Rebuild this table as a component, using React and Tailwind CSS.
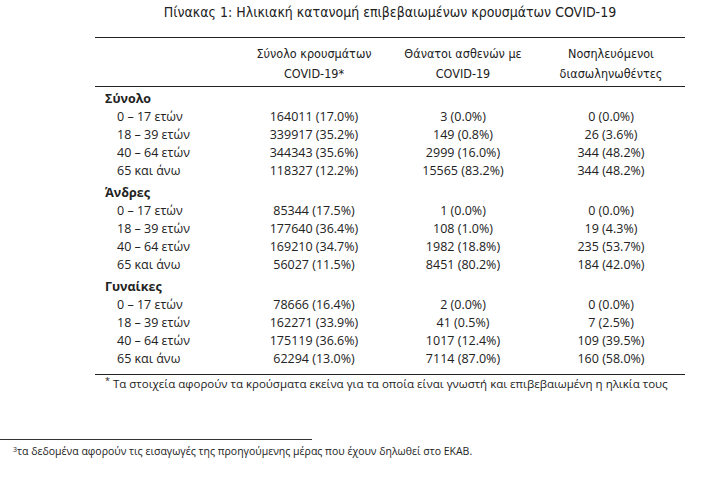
import React from "react";

const groups = [
  {
    name: "Σύνολο",
    rows: [
      ["0 – 17 ετών", "164011 (17.0%)", "3 (0.0%)", "0 (0.0%)"],
      ["18 – 39 ετών", "339917 (35.2%)", "149 (0.8%)", "26 (3.6%)"],
      ["40 – 64 ετών", "344343 (35.6%)", "2999 (16.0%)", "344 (48.2%)"],
      ["65 και άνω", "118327 (12.2%)", "15565 (83.2%)", "344 (48.2%)"],
    ],
  },
  {
    name: "Άνδρες",
    rows: [
      ["0 – 17 ετών", "85344 (17.5%)", "1 (0.0%)", "0 (0.0%)"],
      ["18 – 39 ετών", "177640 (36.4%)", "108 (1.0%)", "19 (4.3%)"],
      ["40 – 64 ετών", "169210 (34.7%)", "1982 (18.8%)", "235 (53.7%)"],
      ["65 και άνω", "56027 (11.5%)", "8451 (80.2%)", "184 (42.0%)"],
    ],
  },
  {
    name: "Γυναίκες",
    rows: [
      ["0 – 17 ετών", "78666 (16.4%)", "2 (0.0%)", "0 (0.0%)"],
      ["18 – 39 ετών", "162271 (33.9%)", "41 (0.5%)", "7 (2.5%)"],
      ["40 – 64 ετών", "175119 (36.6%)", "1017 (12.4%)", "109 (39.5%)"],
      ["65 και άνω", "62294 (13.0%)", "7114 (87.0%)", "160 (58.0%)"],
    ],
  },
];

const narrow = "font-['Liberation_Sans_Narrow','DejaVu_Sans_Condensed',sans-serif]";
const cols = "grid grid-cols-[144px_150px_148px_148px]";

export default function App() {
  return (
    <div className="w-[719px] h-[486px] bg-white text-[#222] overflow-hidden">
      <div className="ml-[95px] w-[590px]">
        <div className={`h-6 text-center text-[14px] leading-6 ${narrow}`}>
          Πίνακας 1: Ηλικιακή κατανομή επιβεβαιωμένων κρουσμάτων COVID-19
        </div>

        <div className="mt-[13px] border-t-[1.5px] border-[#222]" />
        <div className={`${cols} pt-[6px] pb-[2px] text-[12.5px] leading-5 ${narrow}`}>
          <div />
          <div className="text-center">
            Σύνολο κρουσμάτων
            <br />
            COVID-19*
          </div>
          <div className="text-center">
            Θάνατοι ασθενών με
            <br />
            COVID-19
          </div>
          <div className="text-center">
            Νοσηλευόμενοι
            <br />
            διασωληνωθέντες
          </div>
        </div>
        <div className="border-t-[1.5px] border-[#222]" />

        <div className="pt-[3px] pb-[6px] font-['Open_Sans',sans-serif] text-[12.5px] leading-[18px]">
          {groups.map((g, gi) => (
            <div key={g.name} className={gi > 0 ? "pt-1" : ""}>
              <div className="pl-[10px] font-bold">{g.name}</div>
              {g.rows.map((r) => (
                <div key={r[0]} className={cols}>
                  <div className="pl-[22px]">{r[0]}</div>
                  <div className="text-center">{r[1]}</div>
                  <div className="text-center">{r[2]}</div>
                  <div className="text-center">{r[3]}</div>
                </div>
              ))}
            </div>
          ))}
        </div>
        <div className="border-t-[1.5px] border-[#222]" />
        <div className="pl-[10px] whitespace-nowrap font-['Open_Sans',sans-serif] text-[11.5px] leading-[18px]">
          <sup className="text-[9px]">*</sup> Τα στοιχεία αφορούν τα κρούσματα εκείνα για τα οποία είναι γνωστή και επιβεβαιωμένη η ηλικία τους
        </div>
      </div>

      <div className="mt-[46px] w-[312px] border-t border-[#333]" />
      <div className="pl-[13px] pt-[4px] whitespace-nowrap font-['Open_Sans',sans-serif] text-[10.5px] leading-[14px]">
        <sup className="text-[7px]">3</sup>τα δεδομένα αφορούν τις εισαγωγές της προηγούμενης μέρας που έχουν δηλωθεί στο ΕΚΑΒ.
      </div>
    </div>
  );
}
